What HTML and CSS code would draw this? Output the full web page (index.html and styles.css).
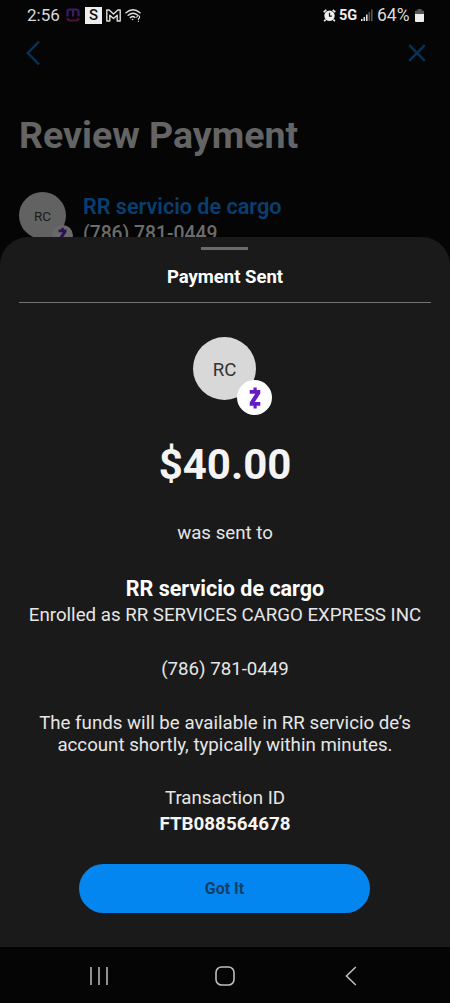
FILE: index.html
```html
<!DOCTYPE html>
<html lang="en">
<head>
<meta charset="utf-8">
<title>Payment Sent</title>
<link rel="stylesheet" href="styles.css">
</head>
<body>
<main class="phone">
  <section class="backdrop">
    <header class="status">
      <span class="clock">2:56</span>
      <svg class="icon-m" width="14" height="14" viewBox="0 0 14 14" fill="none" stroke-width="2.200"><path d="M1.500 8.500V3.500q0-2 2-2h7q2 0 2 2v5M7 1.500v7" stroke="#3f1a66"/><path d="M1.500 10q0 2.500 2.500 2.500h6q2.500 0 2.500-2.500" stroke="#4d1632"/></svg>
      <span class="icon-s">S</span>
      <svg class="icon-mail" width="15" height="13" viewBox="0 0 15 13" fill="none" stroke="#dedede" stroke-width="1.400" stroke-linejoin="round"><path d="M.8 12V1h2.400l4.300 4L11.800 1h2.400v11h-3V6.300L7.500 9.500 3.800 6.300V12z"/></svg>
      <svg class="icon-wifi" width="17" height="15" viewBox="0 0 17 15" fill="none" stroke="#dedede" stroke-width="1.500" stroke-linecap="round"><path d="M1 4.700Q8 -1.300 15 4.700M3.200 7.300Q8 3.200 12.500 7M5.400 9.600Q7.600 7.700 9.800 9.400"/><circle cx="7.600" cy="11.500" r=".8" fill="#dedede" stroke="none"/><path d="M11.800 9.200q.2-1.500 1.500-1.400 1.500.1 1.300 1.500-.1.800-1.200 1.500v.8M13.400 13.400v.1" stroke-width="1.100"/></svg>
      <span class="spacer"></span>
      <svg class="icon-alarm" width="13" height="13" viewBox="0 0 13 13"><path d="M.7 3.200 3.300.8M12.300 3.200 9.700.8M2.600 10.500 1.200 12.200M10.400 10.500l1.400 1.700" stroke="#eee" stroke-width="1.700"/><circle cx="6.500" cy="6.700" r="5.200" fill="#eee"/><path d="M6.500 3.700v3.400h2.400" stroke="#111" stroke-width="1.200" fill="none"/></svg>
      <span class="network">5G</span>
      <svg class="icon-signal" width="12" height="12" viewBox="0 0 12 12"><path d="M0 10h1.600v2H0zM2.500 8h1.600v4H2.500zM5 5.500h1.600V12H5z" fill="#ddd"/><path d="M7.500 3h1.600v9H7.500zM10 .5h1.600V12H10z" fill="#555"/></svg>
      <span class="percent">64%</span>
      <svg class="icon-battery" width="9" height="13" viewBox="0 0 9 13"><path d="M2.500 0h4v1.500H8q1 0 1 1V5H0V2.500q0-1 1-1h1.500z" fill="#555"/><path d="M0 5h9v7q0 1-1 1H1q-1 0-1-1z" fill="#eee"/></svg>
    </header>
    <nav class="topnav">
      <svg width="14" height="26" viewBox="0 0 14 26" fill="none" stroke="#06335a" stroke-width="2.400"><path d="M13 1.500 1.800 13 13 24.500"/></svg>
      <svg width="18" height="18" viewBox="0 0 18 18" fill="none" stroke="#06335a" stroke-width="2.400"><path d="m1.200 1.200 15.600 15.600M16.800 1.200 1.200 16.800"/></svg>
    </nav>
    <h1 class="page-title">Review Payment</h1>
    <div class="payee">
      <div class="avatar avatar-dim">RC
        <span class="zelle zelle-dim"><svg width="9" height="17" viewBox="0 0 12 22"><path d="M.7 3h10.600v3.400L5.800 15h5.500v3.800H.7v-3.400l5.500-8.600H.7zM4.500.5h3.200V4H4.500zM4.500 18h3.200v3.500H4.500z" fill="#2c1151"/></svg></span>
      </div>
      <div class="payee-text">
        <div class="payee-name">RR servicio de cargo</div>
        <div class="payee-phone">(786) 781-0449</div>
      </div>
    </div>
  </section>
  <section class="sheet">
    <div class="handle"></div>
    <h2 class="sheet-title">Payment Sent</h2>
    <div class="divider"></div>
    <div class="avatar avatar-main">RC
      <span class="zelle"><svg width="12" height="22" viewBox="0 0 12 22"><path d="M.7 3h10.600v3.400L5.800 15h5.500v3.800H.7v-3.400l5.500-8.600H.7zM4.500.5h3.200V4H4.500zM4.500 18h3.200v3.500H4.500z" fill="#661bc6"/></svg></span>
    </div>
    <div class="amount">$40.00</div>
    <p class="line sent">was sent to</p>
    <p class="recipient">RR servicio de cargo</p>
    <p class="line enrolled">Enrolled as RR SERVICES CARGO EXPRESS INC</p>
    <p class="line phone-number">(786) 781-0449</p>
    <p class="line funds">The funds will be available in RR servicio de’s<br>account shortly, typically within minutes.</p>
    <p class="line trans">Transaction ID</p>
    <p class="trans-id">FTB088564678</p>
    <button class="got-it">Got It</button>
  </section>
  <footer class="sysnav">
    <svg width="18" height="18" viewBox="0 0 18 18" stroke="#b5b5b5" stroke-width="1.600"><path d="M1 0v18M9 0v18M17 0v18"/></svg>
    <svg width="20" height="20" viewBox="0 0 20 20" fill="none" stroke="#bdbdbd" stroke-width="1.600"><rect x="1" y="1" width="18" height="18" rx="5.500"/></svg>
    <svg width="12" height="20" viewBox="0 0 12 20" fill="none" stroke="#bdbdbd" stroke-width="1.600"><path d="M10.800 1 1.500 10l9.300 9"/></svg>
  </footer>
</main>
</body>
</html>
```
FILE: styles.css
```css
* { box-sizing: border-box; }
body { margin: 0; background: #050505; font-family: Roboto, "Liberation Sans", sans-serif; }
h1, h2, p { margin: 0; }
svg { display: block; flex: none; }
.phone { width: 450px; height: 1003px; overflow: hidden; background: #050505; }
.backdrop { height: 237px; }

.status { display: flex; align-items: center; height: 30px; padding: 0 26px 0 27px; color: #dadada; white-space: nowrap; }
.clock { width: 39px; font-size: 17px; line-height: 30px; }
.icon-s { display: flex; align-items: center; justify-content: center; width: 17px; height: 17px; margin-left: 5px; background: #eee; color: #111; font-size: 15px; font-weight: 500; }
.icon-mail { margin-left: 4px; }
.icon-wifi { margin-left: 4px; }
.spacer { flex: 1; }
.icon-alarm { margin-right: -1px; }
.network { margin-left: 4px; width: 18px; font-size: 14.500px; font-weight: 700; color: #eee; }
.icon-signal { margin-left: 4px; }
.percent { margin-left: 4px; width: 36px; font-size: 17.500px; line-height: 30px; }
.icon-battery { margin-left: 2px; }

.topnav { display: flex; align-items: center; justify-content: space-between; height: 46px; padding: 0 24px 0 26px; }
.page-title { height: 116px; padding: 39px 0 0 19px; font-size: 37.500px; line-height: 40px; font-weight: 700; color: #646464; white-space: nowrap; }
.payee { display: flex; gap: 17px; padding-left: 19px; }
.payee-text { padding-top: 1px; white-space: nowrap; }
.payee-name { font-size: 21.600px; line-height: 28px; font-weight: 600; color: #083f70; }
.payee-phone { font-size: 19.300px; line-height: 25px; font-weight: 500; color: #6c6c6c; }

.avatar { position: relative; display: flex; align-items: center; justify-content: center; border-radius: 50%; }
.avatar-dim { width: 47px; height: 47px; background: #626262; color: #1b1b1b; font-size: 13.500px; }
.avatar-main { width: 63px; height: 63px; margin: 34px 1px 0 0; padding-top: 2px; background: #d8d8d8; color: #333; font-size: 18.700px; }
.zelle { position: absolute; left: 44px; top: 43px; display: flex; align-items: center; justify-content: center; width: 35px; height: 35px; border-radius: 50%; background: #fff; }
.zelle-dim { left: 33px; top: 33px; width: 21px; height: 21px; background: #696969; }

.sheet { position: relative; display: flex; flex-direction: column; align-items: center; height: 710px; border-radius: 28px 28px 0 0; background: #1a1a1a; color: #e6e6e6; text-align: center; white-space: nowrap; }
.handle { width: 47px; height: 3px; margin: 10px 1px 0 0; background: #6b6b6b; }
.sheet-title { margin-top: 14px; font-size: 18.500px; line-height: 26px; font-weight: 700; color: #fff; }
.divider { width: 412px; height: 1px; margin-top: 12px; background: #747474; }
.amount { margin-top: 40px; font-size: 42px; line-height: 50px; font-weight: 700; color: #f4f4f4; }
.line { font-size: 18.700px; line-height: 22px; }
.sent { margin-top: 32px; }
.recipient { margin-top: 31px; font-size: 21.500px; line-height: 28px; font-weight: 700; color: #fff; }
.enrolled { margin-top: 1px; }
.phone-number { margin-top: 32px; }
.funds { margin-top: 32px; }
.trans { margin-top: 31px; }
.trans-id { margin-top: 4px; font-size: 18.800px; line-height: 22px; font-weight: 700; color: #f5f5f5; }
.got-it { width: 291px; height: 49px; margin: 29px 1px 0 0; padding: 0; border: 0; border-radius: 25px; background: #0386ef; color: #123f68; font: 700 16px/49px Roboto, sans-serif; }
.sysnav { display: flex; align-items: center; justify-content: space-between; height: 56px; padding: 1px 93px 0 90px; }
.sysnav svg:nth-child(2) { margin-right: 4px; }
```
